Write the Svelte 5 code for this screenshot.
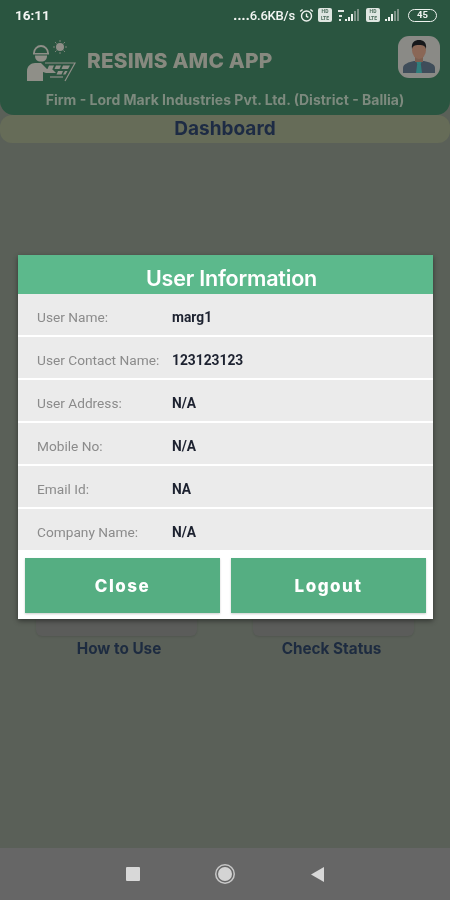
<script>
	const rows = [
		{ label: "User Name:", value: "marg1" },
		{ label: "User Contact Name:", value: "123123123" },
		{ label: "User Address:", value: "N/A" },
		{ label: "Mobile No:", value: "N/A" },
		{ label: "Email Id:", value: "NA" },
		{ label: "Company Name:", value: "N/A" },
	];
	const tiles = ["How to Use", "Check Status"];
</script>

<div class="screen">
	<header class="top">
		<div class="status">
			<span class="time">16:11</span>
			<div class="status-right">
				<span class="speed"><b>....</b>6.6KB/s</span>
				<svg class="alarm" width="15" height="15" viewBox="0 0 15 15" fill="none" stroke="#eef2ee" stroke-width="1.4">
					<circle cx="7.5" cy="8" r="5" />
					<path d="M7.5 5.5V8.4L9.4 9.4M1.2 3.6L3.6 1.4M13.8 3.6L11.4 1.4" />
				</svg>
				<span class="sim">HD<br />LTE</span>
				<svg width="26" height="14" viewBox="0 0 26 14">
					<path d="M2 2h6v2H2zM3 7h3v2H3zM3 11h2v2H3z" fill="#dfe6e1" />
					<path d="M9 11h2v2H9zM12 9h2v4h-2zM15 6h2v7h-2z" fill="#eef2ee" />
					<path d="M18 3h2v10h-2zM21 1h2v12h-2z" fill="#7d9186" />
				</svg>
				<span class="sim">HD<br />LTE</span>
				<svg width="20" height="14" viewBox="0 0 20 14">
					<path d="M1 11h2v2H1zM4 9h2v4H4zM7 6h2v7H7z" fill="#eef2ee" />
					<path d="M10 3h2v10h-2zM13 1h2v12h-2z" fill="#7d9186" />
				</svg>
				<span class="battery">45</span>
			</div>
		</div>

		<div class="brand">
			<div class="brand-left">
				<svg class="logo" width="50" height="42" viewBox="0 0 50 42" fill="#8f8f88">
					<circle cx="34" cy="7" r="4" />
					<path d="M34 0v2M34 12v2M27 7h2M39 7h2M29 2l1.500 1.500M39 2l-1.500 1.500M29 12l1.500-1.500M39 12l-1.500-1.500" stroke="#8f8f88" stroke-width="0.800" />
					<path d="M8 13a7 7 0 0 1 14 0" fill="none" stroke="#8f8f88" stroke-width="1.800" />
					<path d="M7 13h16v1.500H7z" />
					<path d="M9 15.500h12c0 4-2 6-6 6s-6-2-6-6z" />
					<path d="M1 41V31c0-5 4-8 8-8h6l6 6h5l4 4h-10l-3-1v9z" />
					<path d="M19 23h30l-10 18" fill="none" stroke="#8f8f88" stroke-width="1.200" />
					<path d="M23 25.500h5l-1.500 3.500h-5zM30 25.500h5l-1.500 3.500h-5zM37 25.500h7l-2 3.500h-6.500zM32 31h5l-1.500 3.500h-5zM39 31h2.500l-2 3.500h-2.500z" />
					<path d="M24 37h13" stroke="#8f8f88" stroke-width="1.200" />
				</svg>
				<span class="app-name">RESIMS AMC APP</span>
			</div>
			<div class="avatar">
				<svg width="42" height="42" viewBox="0 0 42 42">
					<path d="M5 37v-5c0-4 6-6 11-7h10c5 1 11 3 11 7v5z" fill="#3f4d5a" />
					<path d="M18 25h6l-1.200 3 1.200 9h-6l1.200-9z" fill="#2f7f7d" />
					<rect x="17" y="19" width="8" height="7" fill="#7c5f50" />
					<ellipse cx="21" cy="14" rx="7" ry="9" fill="#8a6756" />
					<path d="M14 13C13 6 17 4 21 4s8 2 7 9c-1-3-2-4-7-4s-6 1-7 4z" fill="#16181b" />
				</svg>
			</div>
		</div>

		<p class="firm">Firm - Lord Mark Industries Pvt. Ltd. (District - Ballia)</p>
	</header>

	<div class="dash">Dashboard</div>

	<main class="body">
		{#each tiles as tile}
			<div class="tile">
				<div class="tile-box"></div>
				<span>{tile}</span>
			</div>
		{/each}
	</main>

	<nav class="nav">
		<span class="nav-square"></span>
		<span class="nav-home"></span>
		<svg width="15" height="17" viewBox="0 0 15 17"><path d="M14 1V16L1 8.500z" fill="#d8d8d8" /></svg>
	</nav>

	<section class="modal">
		<h2>User Information</h2>
		{#each rows as row}
			<div class="row">
				<span class="label">{row.label}</span>
				<span class="value">{row.value}</span>
			</div>
		{/each}
		<div class="actions">
			<button>Close</button>
			<button>Logout</button>
		</div>
	</section>
</div>

<style>
:global(body){
	margin:0;
	background:#5a6058;
}

.screen{
	position:relative;
	width:450px;
	height:900px;
	display:flex;
	flex-direction:column;
	overflow:hidden;
	background:#5a6058;
	font-family:"Inter","Liberation Sans",sans-serif;
	filter:blur(0.35px);
}

.top{
	height:115px;
	box-sizing:border-box;
	background:#2a5540;
	border-radius:0 0 14px 14px;
	padding:0 15px;
}

.status{
	height:30px;
	display:flex;
	justify-content:space-between;
	align-items:center;
	color:#f2f5f2;
}

.time{
	font:700 13.5px "Roboto",sans-serif;
}

.status-right{
	display:flex;
	align-items:center;
	gap:4px;
	margin-right:-2px;
}

.speed{
	font:500 13px "Roboto",sans-serif;
	letter-spacing:-0.2px;
}

.speed b{
	font-weight:900;
	letter-spacing:0.2px;
}

.sim{
	width:14px;
	height:14px;
	background:#dfe6e1;
	border-radius:2px;
	color:#4c6c5b;
	font:700 5px/6.500px "Roboto",sans-serif;
	text-align:center;
}

.battery{
	width:29px;
	height:13px;
	box-sizing:border-box;
	border:1.500px solid #eef2ee;
	border-radius:7px;
	font:700 9.500px/10px "Roboto",sans-serif;
	text-align:center;
}

.brand{
	display:flex;
	justify-content:space-between;
	align-items:center;
	height:48px;
	margin:6px -5px 0 0;
}

.brand-left{
	display:flex;
	align-items:center;
	gap:11px;
	padding-left:11px;
}

.logo{
	margin-top:2px;
}

.app-name{
	font-size:20.800px;
	font-weight:800;
	color:#87897f;
	letter-spacing:0.2px;
}

.avatar{
	width:42px;
	height:42px;
	background:#8a8a86;
	border-radius:11px;
	overflow:hidden;
	margin-top:-6px;
}

.firm{
	margin:7px -15px 0;
	text-align:center;
	font-size:14px;
	font-weight:700;
	color:#7d8a7e;
	white-space:nowrap;
}

.dash{
	height:28px;
	background:#666c58;
	border-radius:12px;
	text-align:center;
	font-size:19px;
	font-weight:700;
	line-height:28px;
	color:#1d2b44;
}

.body{
	flex:1;
	display:flex;
	align-items:flex-end;
	gap:56px;
	padding:0 35px 190px 36px;
}

.tile{
	width:161px;
	display:flex;
	flex-direction:column;
	align-items:center;
	gap:3px;
}

.tile-box{
	width:100%;
	height:60px;
	background:#5b5c5a;
	border-radius:6px;
	box-shadow:0 1px 2px rgba(0,0,0,0.1);
}

.tile span{
	font-size:15.300px;
	font-weight:700;
	color:#1d2b40;
	white-space:nowrap;
}

.tile:first-child span{
	margin-left:5px;
}

.tile:last-child span{
	margin-right:4px;
}

.nav{
	height:52px;
	background:#666666;
	display:flex;
	justify-content:center;
	align-items:center;
	gap:78px;
}

.nav-square{
	width:14px;
	height:14px;
	background:#d8d8d8;
	border-radius:1px;
}

.nav-home{
	width:14px;
	height:14px;
	background:#d4d4d4;
	border-radius:50%;
	box-shadow:0 0 0 1.500px #666666, 0 0 0 3px #c8c8c8;
}

/* dialog sits over the dimmed page */
.modal{
	position:absolute;
	left:18px;
	top:255px;
	width:415px;
	background:#fff;
	box-shadow:0 2px 5px rgba(0,0,0,0.45);
}

.modal h2{
	margin:0;
	height:39px;
	box-sizing:border-box;
	padding-left:12px;
	background:#5cb98c;
	color:#fff;
	font-size:21.500px;
	font-weight:600;
	line-height:47px;
	text-align:center;
	overflow:hidden;
	letter-spacing:-0.2px;
}

.row{
	height:41px;
	box-sizing:border-box;
	padding:5px 0 0 19px;
	margin-bottom:2px;
	background:#ebebeb;
	display:flex;
	align-items:center;
}

.label{
	width:135px;
	font:400 13.700px "Roboto",sans-serif;
	color:#8b8b8b;
	white-space:nowrap;
}

.value{
	font:700 13.800px "Roboto",sans-serif;
	color:#1d2230;
}

.actions{
	display:flex;
	gap:11px;
	padding:6px 7px;
}

.actions button{
	flex:1;
	height:55px;
	border:none;
	background:#55ae82;
	color:#fff;
	font-family:"Inter","Liberation Sans",sans-serif;
	font-size:17px;
	font-weight:800;
	letter-spacing:1.500px;
	box-shadow:0 1px 2px rgba(0,0,0,0.2);
}
</style>
